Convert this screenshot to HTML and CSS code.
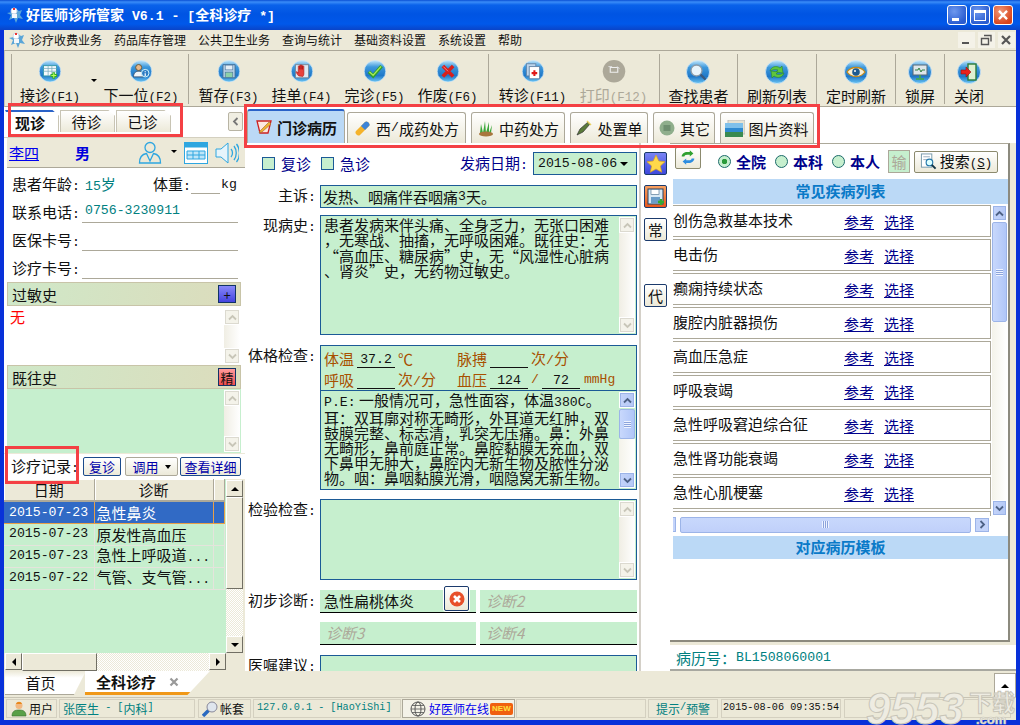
FILE: index.html
```html
<!DOCTYPE html>
<html lang="zh-CN">
<head>
<meta charset="utf-8">
<title>好医师诊所管家</title>
<link rel="stylesheet" href="styles.css">
</head>
<body>
<svg class="sprite" width="0" height="0" aria-hidden="true">
  <defs>
    <linearGradient id="ball" x1="0" y1="0" x2="0" y2="1">
      <stop offset="0" stop-color="#bfe6fb"/><stop offset=".3" stop-color="#3d98dc"/><stop offset=".7" stop-color="#1f78c8"/><stop offset="1" stop-color="#6cc6f4"/>
    </linearGradient>
    <symbol id="base" viewBox="0 0 24 24"><circle cx="12" cy="12" r="11.5" fill="url(#ball)" stroke="#cfe6f6" stroke-width=".8"/></symbol>
    <symbol id="chev" viewBox="0 0 9 7"><path d="M1 5.5 4.5 2 8 5.5" fill="none" stroke="currentColor" stroke-width="1.8"/></symbol>
    <symbol id="app" viewBox="0 0 18 18">
      <path d="M9 2 13 5 16 4 14 9 17 13 12 12 10 17 8 12 3 14 5 9 1 7 6 6Z" fill="#5aa6d8"/>
      <circle cx="8" cy="5" r="3" fill="#fff" stroke="#c8d8e8"/><rect x="7" y="2" width="2" height="2" fill="#e33"/>
      <path d="M6 8h5v4H6z" fill="#f4f8fb"/>
    </symbol>
  </defs>
</svg>

<div class="window">
  <header class="titlebar">
    <svg class="appicon"><use href="#app"/></svg>
    <span class="title">好医师诊所管家<span class="nb"> V6.1 - [</span>全科诊疗<span class="nb"> *]</span></span>
    <div class="winbtns">
      <div class="wb"><span class="wb-min"></span></div>
      <div class="wb"><span class="wb-max"></span></div>
      <div class="wb wb-close"><svg viewBox="0 0 20 20"><path d="M5.5 5.5 14.5 14.5M14.5 5.5 5.5 14.5" stroke="#fff" stroke-width="2.6"/></svg></div>
    </div>
  </header>

  <nav class="menubar">
    <svg class="menuicon"><use href="#app"/></svg>
    <span>诊疗收费业务</span><span>药品库存管理</span><span>公共卫生业务</span><span>查询与统计</span><span>基础资料设置</span><span>系统设置</span><span>帮助</span>
    <div class="mdi">
      <div class="mb"><svg viewBox="0 0 16 16"><path d="M4 11h7" stroke="#555" stroke-width="2"/></svg></div>
      <div class="mb"><svg viewBox="0 0 16 16"><path d="M6 3.5h7v6M3.5 6.5h7v6h-7z" fill="none" stroke="#555" stroke-width="1.4"/></svg></div>
      <div class="mb"><svg viewBox="0 0 16 16"><path d="M4 4 12 12M12 4 4 12" stroke="#555" stroke-width="2.2"/></svg></div>
    </div>
  </nav>

  <div class="toolbar">
    <div class="tg g1">
      <div class="tb w76"><svg class="ico" viewBox="0 0 24 24"><use href="#base"/><rect x="5" y="6" width="14" height="11" fill="#f4fafc" stroke="#39a"/><path d="M5 9h14M5 12h14M10 6v11M14 6v11" stroke="#7ab" stroke-width=".8"/><path d="M16 13v7M12.5 16.5h7" stroke="#3a3" stroke-width="3"/><path d="M16 14v5M13.5 16.5h5" stroke="#bf5" stroke-width="1.2"/></svg><span>接诊<span class="nt">(F1)</span></span></div>
      <div class="tarrow"></div>
      <div class="tb w82"><svg class="ico" viewBox="0 0 24 24"><use href="#base"/><circle cx="9.5" cy="8" r="3.2" fill="#e8b98c" stroke="#653"/><path d="M4 18c0-5 3-6 5.500-6s5 1 5 6z" fill="#f0f4f8" stroke="#357"/><circle cx="16.500" cy="14" r="4" fill="#2c7cc4" stroke="#dff"/><path d="M16.500 12v1M16.500 14v3" stroke="#fff" stroke-width="1.300"/></svg><span>下一位<span class="nt">(F2)</span></span></div>
    </div>
    <div class="tg g2">
      <div class="tb w73"><svg class="ico" viewBox="0 0 24 24"><use href="#base"/><path d="M5.500 5h13v14h-13z" fill="#b5cfe4" stroke="#3b6a96"/><rect x="8" y="5.500" width="8" height="5" fill="#e5eef6" stroke="#5b82a8" stroke-width=".7"/><rect x="8" y="13" width="8" height="5.500" fill="#8dd0a8" stroke="#4a7a9a" stroke-width=".7"/></svg><span>暂存<span class="nt">(F3)</span></span></div>
      <div class="tb w73"><svg class="ico" viewBox="0 0 24 24"><use href="#base"/><rect x="5" y="5" width="14" height="14" fill="#dfe8f2" stroke="#789"/><path d="M8.500 17c-2-2-3-4-2.500-4.500s1.500.5 2 1.500V7c0-1 1.500-1 1.500 0v3-4c0-1 1.500-1 1.500 0v4-4c0-1 1.500-1 1.500 0v4-3c0-1 1.500-1 1.500 0v8c0 1-.5 2-1 2.500z" fill="#e8413c" stroke="#a11" stroke-width=".6"/></svg><span>挂单<span class="nt">(F4)</span></span></div>
      <div class="tb w73"><svg class="ico" viewBox="0 0 24 24"><use href="#base"/><path d="M5.500 12.500 10 17 19 6.500" fill="none" stroke="#2f9e2f" stroke-width="3.800"/><path d="M6 12.500 10 16.300 18.500 6.800" fill="none" stroke="#a8ea5a" stroke-width="1.400"/></svg><span>完诊<span class="nt">(F5)</span></span></div>
      <div class="tb w73"><svg class="ico" viewBox="0 0 24 24"><use href="#base"/><path d="M6.500 6.500 17.500 17.500M17.500 6.500 6.500 17.500" stroke="#d8201c" stroke-width="3.800"/><path d="M7 7 12 12" stroke="#f88" stroke-width="1"/></svg><span>作废<span class="nt">(F6)</span></span></div>
    </div>
    <div class="tg g3">
      <div class="tb w81"><svg class="ico" viewBox="0 0 24 24"><use href="#base"/><rect x="5" y="4" width="10" height="13" fill="#bcd4ec" stroke="#68a"/><rect x="8" y="7" width="11" height="13" fill="#fff" stroke="#68a"/><path d="M13.500 11v6M10.500 14h6" stroke="#e01818" stroke-width="2.200"/></svg><span>转诊<span class="nt">(F11)</span></span></div>
      <div class="tb w81 off"><svg class="ico" viewBox="0 0 24 24"><circle cx="12" cy="12" r="12" fill="#aca899"/><path d="M8 8h8v5H8z" fill="none" stroke="#eee" stroke-width="1.200"/><path d="M6 7h4M15 7l3 2" stroke="#ddd"/></svg><span>打印<span class="nt">(F12)</span></span></div>
    </div>
    <div class="tg g4">
      <div class="tb"><svg class="ico" viewBox="0 0 24 24"><use href="#base"/><circle cx="10.500" cy="10.500" r="5.500" fill="#e8f4fb" stroke="#8a9aa8" stroke-width="1.300"/><path d="M14.500 14.500 19.500 19.500" stroke="#3a5a80" stroke-width="2.400"/></svg><span>查找患者</span></div>
    </div>
    <div class="tg g5">
      <div class="tb"><svg class="ico" viewBox="0 0 24 24"><use href="#base"/><path d="M5 11c1-4 6-6 10-3l2-2 1 7-7-1 2-2c-3-1-6 0-8 1z" fill="#5fc63c" stroke="#2a8a2a" stroke-width=".6"/><path d="M19 13c-1 4-6 6-10 3l-2 2-1-7 7 1-2 2c3 1 6 0 8-1z" fill="#5fc63c" stroke="#2a8a2a" stroke-width=".6"/></svg><span>刷新列表</span></div>
    </div>
    <div class="tg g5">
      <div class="tb"><svg class="ico" viewBox="0 0 24 24"><use href="#base"/><path d="M3 12c4-6 14-6 18 0-4 6-14 6-18 0z" fill="#f8f0d8" stroke="#c88a18" stroke-width="1.300"/><circle cx="12" cy="12" r="3.800" fill="#1c5a90"/><circle cx="11" cy="11" r="1" fill="#fff"/></svg><span>定时刷新</span></div>
    </div>
    <div class="tg g6">
      <div class="tb"><svg class="ico" viewBox="0 0 24 24"><use href="#base"/><rect x="5" y="5" width="14" height="10" fill="#dde6ea" stroke="#567"/><path d="M7 10h3l1-2 2 4 1-2h3" fill="none" stroke="#273" stroke-width=".9"/><path d="M12 15v3M8 19h8" stroke="#4a4" stroke-width="1.500"/></svg><span>锁屏</span></div>
    </div>
    <div class="tg g6">
      <div class="tb"><svg class="ico" viewBox="0 0 24 24"><use href="#base"/><rect x="11" y="4" width="8" height="16" fill="#dff0d0" stroke="#2a7a3a" stroke-width="1.400"/><path d="M4 10h5V7l5 5-5 5v-3H4z" fill="#e8201c" stroke="#911" stroke-width=".6"/></svg><span>关闭</span></div>
    </div>
  </div>

  <main class="main">
    <aside class="left">
      <div class="ltabs">
        <div class="ltab on">现诊</div><div class="ltab">待诊</div><div class="ltab">已诊</div>
        <div class="collapse"><svg class="chv chv-l"><use href="#chev"/></svg></div>
      </div>
      <div class="patient">
        <a class="pname">李四</a><span class="psex">男</span>
        <svg class="pi-user" viewBox="0 0 24 24"><circle cx="12" cy="6.500" r="5" fill="none" stroke="#2ea6e0" stroke-width="1.300"/><path d="M1.500 22c0-7 4-9 7-9.500L12 20l3.500-7.500c3 .5 7 2.500 7 9.500z" fill="none" stroke="#2ea6e0" stroke-width="1.300"/></svg>
        <span class="pdrop"></span>
        <svg class="pi-cal" viewBox="0 0 24 22"><rect x=".5" y=".5" width="23" height="21" fill="#fff" stroke="#2ea6e0"/><rect x=".5" y=".5" width="23" height="5" fill="#2ea6e0"/><path d="M3 9h18v8H3zM3 13h18M9 9v8M15 9v8" fill="#bfe6f8" stroke="#2ea6e0"/></svg>
        <svg class="pi-snd" viewBox="0 0 24 22"><path d="M1 7h5l7-6v20l-7-6H1z" fill="#e6f4fb" stroke="#2ea6e0"/><path d="M16 7c2 2 2 6 0 8M19 4c3 4 3 10 0 14M21.500 2c4 5 4 13 0 18" fill="none" stroke="#2ea6e0" stroke-width="1.300"/></svg>
      </div>
      <div class="info">
        <div class="irow"><span class="il">患者年龄<span class="n">:</span></span><span class="val age"><span class="n">15</span>岁</span><span class="il wt">体重<span class="n">:</span></span><span class="blank"></span><span class="n">kg</span></div>
        <div class="irow"><span class="il">联系电话<span class="n">:</span></span><span class="line val"><span class="n">0756-3230911</span></span></div>
        <div class="irow"><span class="il">医保卡号<span class="n">:</span></span><span class="line"></span></div>
        <div class="irow"><span class="il">诊疗卡号<span class="n">:</span></span><span class="line"></span></div>
      </div>
      <div class="hhead"><span>过敏史</span><span class="mini mini-blue">+</span></div>
      <div class="hbody white"><span class="red">无</span>
        <div class="vsb off"><div class="sbb"><svg class="chv"><use href="#chev"/></svg></div><div class="sbt"></div><div class="sbb"><svg class="chv chv-d"><use href="#chev"/></svg></div></div>
      </div>
      <div class="hhead"><span>既往史</span><span class="mini mini-red">精</span></div>
      <div class="hbody green">
        <div class="vsb off"><div class="sbb"><svg class="chv"><use href="#chev"/></svg></div><div class="sbt"></div><div class="sbb"><svg class="chv chv-d"><use href="#chev"/></svg></div></div>
      </div>
      <div class="records">
        <span class="rlabel">诊疗记录<span class="n">:</span></span>
        <span class="rbtn r1">复诊</span><span class="rbtn r2">调用<i class="caret"></i></span><span class="rbtn r3">查看详细</span>
      </div>
      <div class="tablewrap">
        <div class="tablearea">
          <table class="rtable">
            <thead><tr><th class="c1">日期</th><th class="c2">诊断</th><th></th></tr></thead>
            <tbody>
              <tr class="sel"><td class="n">2015-07-23</td><td>急性鼻炎</td><td></td></tr>
              <tr><td class="n">2015-07-23</td><td>原发性高血压</td><td></td></tr>
              <tr><td class="n">2015-07-23</td><td>急性上呼吸道<span class="n">...</span></td><td></td></tr>
              <tr><td class="n">2015-07-22</td><td>气管、支气管<span class="n">...</span></td><td></td></tr>
            </tbody>
          </table>
        </div>
        <div class="xpsb">
          <div class="xb"><i class="tri tri-u"></i></div><div class="xthumb"></div><div class="xtrack"></div><div class="xb"><i class="tri tri-d"></i></div>
        </div>
      </div>
      <div class="xph">
        <div class="xb"><i class="tri tri-l"></i></div><div class="xthumb-h"></div><div class="xtrack"></div><div class="xb"><i class="tri tri-r"></i></div><div class="xcorner"></div>
      </div>
    </aside>

    <section class="work">
      <div class="ctabs">
        <div class="ctab on t1"><svg class="ti" viewBox="0 0 18 18"><path d="M2 3h14l-3 12H5z" fill="#fde8e0" stroke="#c22" stroke-width="1.300"/><path d="M5 13 14 4l2 2-9 8-3 1z" fill="#f0b030" stroke="#963" stroke-width=".6"/></svg>门诊病历</div>
        <div class="ctab t2"><svg class="ti" viewBox="0 0 18 18"><path d="M2 12 11 3c2-2 6 2 4 4l-9 9c-2 2-6-2-4-4z" fill="#f5b32a"/><path d="M7 7 11 3c2-2 6 2 4 4l-4 4z" fill="#3c84d8"/></svg>西<span class="n">/</span>成药处方</div>
        <div class="ctab t3"><svg class="ti" viewBox="0 0 18 18"><path d="M3 14 4 5l2 9 2-12 1 12 3-11 0 11 3-8-1 8z" fill="#3ca83c"/><ellipse cx="9" cy="15" rx="7" ry="2.500" fill="#a8763c"/></svg>中药处方</div>
        <div class="ctab t4"><svg class="ti" viewBox="0 0 18 18"><path d="M2 16 5 10l8-7 2 2-7 8z" fill="#5a7a3a" stroke="#333" stroke-width=".7"/><path d="M12 2 16 6" stroke="#e8d060" stroke-width="1.500"/></svg>处置单</div>
        <div class="ctab t5"><svg class="ti" viewBox="0 0 18 18"><circle cx="9" cy="9" r="7.500" fill="#8fae8c"/><rect x="5.500" y="6" width="7" height="6" fill="#6f8f70"/></svg>其它</div>
        <div class="ctab t6"><svg class="ti ti-w" viewBox="0 0 20 17"><rect x="3" y="0" width="17" height="14" fill="#e6e2d2" stroke="#bbb"/><rect x="0" y="3" width="18" height="14" fill="#2f8ad0"/><rect x="0" y="3" width="18" height="5" fill="#7fc0ea"/><path d="M0 12h18v5H0z" fill="#3a8a50"/></svg>图片资料</div>
      </div>
      <div class="wbody">
        <div class="cform">
          <div class="checks">
            <i class="cb"></i><span class="navy">复诊</span><i class="cb cb2"></i><span class="navy">急诊</span>
            <span class="navy onset">发病日期<span class="n">:</span></span>
            <div class="select"><span class="n">2015-08-06</span><i class="tri tri-d"></i></div>
          </div>
          <div class="frow r-main"><label>主诉<span class="n">:</span></label><div class="field one">发热、咽痛伴吞咽痛<span class="n">3</span>天。</div></div>
          <div class="frow r-hist"><label>现病史<span class="n">:</span></label>
            <div class="field multi"><div class="ftext">患者发病来伴头痛、全身乏力，无张口困难<br>，无寒战、抽搐，无呼吸困难。既往史：无<br>“高血压、糖尿病”史，无“风湿性心脏病<br>、肾炎”史，无药物过敏史。</div>
              <div class="vsb off"><div class="sbb"><svg class="chv"><use href="#chev"/></svg></div><div class="sbt"></div><div class="sbb"><svg class="chv chv-d"><use href="#chev"/></svg></div></div>
            </div>
          </div>
          <div class="frow r-phys"><label>体格检查<span class="n">:</span></label>
            <div class="field phys">
              <div class="vitals">
                <div class="vrow"><span class="vl">体温</span><span class="vb"><span class="n">37.2</span></span><span class="vu">℃</span><span class="vl">脉搏</span><span class="vb"></span><span class="vu2">次<span class="n">/</span>分</span></div>
                <div class="vrow"><span class="vl">呼吸</span><span class="vb"></span><span class="vu">次<span class="n">/</span>分</span><span class="vl">血压</span><span class="vb"><span class="n">124</span></span><span class="vs n">/</span><span class="vb"><span class="n">72</span></span><span class="vmm n">mmHg</span></div>
              </div>
              <div class="pe"><div class="ftext tight"><span class="n">P.E:</span> 一般情况可，急性面容，体温<span class="n">380C</span>。<br>耳：双耳廓对称无畸形，外耳道无红肿，双<br>鼓膜完整、标志清，乳突无压痛。鼻：外鼻<br>无畸形，鼻前庭正常。鼻腔黏膜无充血，双<br>下鼻甲无肿大，鼻腔内无新生物及脓性分泌<br>物。咽：鼻咽黏膜光滑，咽隐窝无新生物。</div>
                <div class="vsb blue"><div class="sbb"><svg class="chv"><use href="#chev"/></svg></div><div class="sbthumb"><i class="grip"></i></div><div class="sbt"></div><div class="sbb"><svg class="chv chv-d"><use href="#chev"/></svg></div></div>
              </div>
            </div>
          </div>
          <div class="frow r-lab"><label>检验检查<span class="n">:</span></label>
            <div class="field multi">
              <div class="ftext"></div>
              <div class="vsb off"><div class="sbb"><svg class="chv"><use href="#chev"/></svg></div><div class="sbt"></div><div class="sbb"><svg class="chv chv-d"><use href="#chev"/></svg></div></div>
            </div>
          </div>
          <div class="frow r-diag"><label>初步诊断<span class="n">:</span></label>
            <div class="diag">
              <div class="dg dg-a">急性扁桃体炎<div class="dclear"><svg viewBox="0 0 16 16"><circle cx="8" cy="8" r="7.500" fill="#e8502a"/><path d="M5 5 11 11M11 5 5 11" stroke="#fff" stroke-width="2.600"/></svg></div></div>
              <div class="dg ph">诊断<span>2</span></div>
              <div class="dg ph">诊断<span>3</span></div>
              <div class="dg ph">诊断<span>4</span></div>
            </div>
          </div>
          <div class="frow r-adv"><label>医嘱建议<span class="n">:</span></label><div class="field advice"></div></div>
        </div>
        <div class="sidebtns">
          <div class="sbtn sb-blue"><svg viewBox="0 0 20 20"><path d="M10 1l2.800 6 6.200.7-4.600 4.300 1.300 6.300L10 15l-5.700 3.300L5.600 12 1 7.700 7.200 7z" fill="#ffd84a" stroke="#d8a020" stroke-width=".7"/></svg></div>
          <div class="sbtn sb-orange"><svg viewBox="0 0 20 20"><rect x="2" y="2" width="15" height="15" fill="#d8e8f4" stroke="#246"/><rect x="5" y="2.500" width="8" height="5" fill="#fff" stroke="#468" stroke-width=".6"/><rect x="5" y="10" width="9" height="6.500" fill="#6a9cc8"/><path d="M15 12v6M12 15h6" stroke="#3a3" stroke-width="2.400"/></svg></div>
          <div class="sbtn">常</div>
          <div class="sbtn s-dai">代</div>
        </div>
        <div class="rcol">
          <div class="rpanel">
            <div class="rtools">
              <div class="rf"><svg viewBox="0 0 20 16"><path d="M3 7c0-3 3-5 6-5h3V0l4 3.500L12 7V5H9C7 5 6 6 6 7H3z" fill="#2fa02f"/><path d="M17 9c0 3-3 5-6 5H8v2l-4-3.500L8 9v2h3c2 0 3-1 3-2h3z" fill="#2d8de0"/></svg></div>
              <i class="radio on"></i><b>全院</b><i class="radio"></i><b>本科</b><i class="radio"></i><b>本人</b>
              <span class="shu">输</span>
              <div class="search"><svg viewBox="0 0 18 18"><rect x="1.500" y="1" width="11" height="14" fill="#fff" stroke="#79a"/><path d="M3.500 4h7M3.500 7h4" stroke="#9ab"/><circle cx="10" cy="10" r="3.500" fill="#dff" stroke="#27a" stroke-width="1.200"/><path d="M12.500 12.500 16.500 16.500" stroke="#134" stroke-width="2"/></svg><span>搜索<span class="nt">(<u>S</u>)</span></span></div>
            </div>
            <div class="rhead">常见疾病列表</div>
            <div class="dlist">
              <div class="drows">
                <div class="drow"><span>创伤急救基本技术</span><a>参考</a><a>选择</a></div>
                <div class="drow"><span>电击伤</span><a>参考</a><a>选择</a></div>
                <div class="drow"><span>癫痫持续状态</span><a>参考</a><a>选择</a></div>
                <div class="drow"><span>腹腔内脏器损伤</span><a>参考</a><a>选择</a></div>
                <div class="drow"><span>高血压急症</span><a>参考</a><a>选择</a></div>
                <div class="drow"><span>呼吸衰竭</span><a>参考</a><a>选择</a></div>
                <div class="drow"><span>急性呼吸窘迫综合征</span><a>参考</a><a>选择</a></div>
                <div class="drow"><span>急性肾功能衰竭</span><a>参考</a><a>选择</a></div>
                <div class="drow"><span>急性心肌梗塞</span><a>参考</a><a>选择</a></div>
                <div class="drow"></div>
              </div>
              <div class="vsb blue big"><div class="sbb"><svg class="chv"><use href="#chev"/></svg></div><div class="sbthumb"><i class="grip"></i></div><div class="sbt"></div><div class="sbb"><svg class="chv chv-d"><use href="#chev"/></svg></div></div>
            </div>
            <div class="hsb">
              <div class="hstub"></div><div class="hthumb"><i class="grip-h"></i></div><div class="sbb"><svg class="chv chv-r"><use href="#chev"/></svg></div>
            </div>
            <div class="rhead r2h">对应病历模板</div>
          </div>
          <div class="recno"><span>病历号：</span><span class="n">BL1508060001</span></div>
        </div>
      </div>
    </section>
  </main>

  <div class="dock">
    <div class="dtab">首页</div>
    <div class="dtab active">全科诊疗<svg class="dx" viewBox="0 0 10 10"><path d="M1.500 1.500 8.500 8.500M8.500 1.500 1.500 8.500" stroke="#999" stroke-width="2.200"/></svg></div>
    <div class="dockup"><i class="tri tri-u"></i></div>
  </div>

  <footer class="status">
    <div class="sc s-user"><svg class="si" viewBox="0 0 16 16"><circle cx="8" cy="4.500" r="3.500" fill="#f2b880"/><path d="M5 3c1-3 5-3 6 0z" fill="#e8881c"/><path d="M1 15c0-5 3-6 7-6s7 1 7 6z" fill="#58a048" stroke="#3a7030" stroke-width=".6"/></svg>用户</div>
    <div class="sc s-doc teal">张医生<span class="ns"> - [</span>内科<span class="ns">]</span></div>
    <div class="sc s-acct"><svg class="si" viewBox="0 0 16 16"><path d="M1 15 8 8" stroke="#2a6ac0" stroke-width="3.400"/><circle cx="10" cy="6" r="5" fill="#dfe6ee" stroke="#889"/></svg>帐套</div>
    <div class="sc s-ip teal ns">127.0.0.1 - [HaoYiShi]</div>
    <div class="sc s-online"><svg class="si" viewBox="0 0 16 16"><circle cx="8" cy="8" r="7" fill="none" stroke="#555"/><ellipse cx="8" cy="8" rx="3" ry="7" fill="none" stroke="#555"/><path d="M1 8h14M2 4.500h12M2 11.500h12" stroke="#555" stroke-width=".8"/></svg><span class="online">好医师在线</span><span class="newb">NEW</span></div>
    <div class="sc s-empty"></div>
    <div class="sc s-tip teal">提示<span class="ns">/</span>预警</div>
    <div class="sc s-time ns">2015-08-06 09:35:54</div>
    <div class="sc s-last"></div>
  </footer>

  <div class="hl hl-a"></div>
  <div class="hl hl-b"></div>
  <div class="hl hl-c"></div>
  <div class="wmark"><span class="wm-n">9553</span><span class="wm-c">下载</span><span class="wm-d">.com</span></div>
</div>
</body>
</html>
```

FILE: styles.css
```css
* { box-sizing: border-box; }
html, body { margin: 0; padding: 0; }
body {
  width: 1020px; height: 725px; overflow: hidden;
  font-family: "Noto Sans CJK SC", "Noto Sans", sans-serif;
  font-size: 15px; line-height: 1; color: #111;
}
.sprite { position: absolute; }
.n { font-family: "Liberation Mono", monospace; font-size: 13.2px; }
.nt { font-family: "Liberation Mono", monospace; font-size: 12.5px; }
.ns { font-family: "Liberation Mono", monospace; font-size: 10.2px; }
.nb { font-family: "Liberation Mono", monospace; font-size: 13.2px; font-weight: 700; }
i { display: block; font-style: normal; }

.window {
  position: relative; width: 1020px; height: 725px; overflow: hidden;
  padding: 0 4px 5px;
  background: #0831d9;
  display: flex; flex-direction: column;
}

/* title bar */
.titlebar {
  height: 30px; margin: 0 -4px; padding: 0 7px 0 6px; flex: none;
  display: flex; align-items: center; color: #fff;
  background: linear-gradient(#0a4fd4 0, #3a8cf8 2px, #0a62ea 5px, #0054e3 14px, #0058ea 24px, #0a44c8 30px);
}
.appicon { width: 18px; height: 18px; margin-right: 2px; }
.title { font-size: 14px; font-weight: 700; white-space: pre; }
.winbtns { margin-left: auto; display: flex; gap: 3px; }
.wb {
  width: 20px; height: 20px; border: 1px solid #fff; border-radius: 3px;
  background: radial-gradient(circle at 35% 30%, #6e98ee, #2a5cd0 75%);
  position: relative; display: flex; align-items: center; justify-content: center;
}
.wb-min { position: absolute; left: 4px; bottom: 3px; width: 7px; height: 3px; background: #fff; }
.wb-max { width: 12px; height: 11px; border: 1px solid #fff; border-top-width: 3px; }
.wb-close { background: radial-gradient(circle at 35% 30%, #f09878, #d8441c 75%); }
.wb-close svg { width: 18px; height: 18px; }

/* menu */
.menubar {
  height: 20px; flex: none; background: #ece9d8; display: flex; align-items: center;
  gap: 12px; font-size: 12px; padding-left: 4px; color: #111;
}
.menuicon { width: 18px; height: 18px; margin-right: -8px; }
.mdi { margin-left: auto; display: flex; gap: 3px; padding-right: 1px; }
.mb { width: 17px; height: 16px; background: #f4f2e8; }
.mb svg { width: 16px; height: 16px; display: block; }

/* toolbar */
.toolbar {
  height: 57px; flex: none; background: #ece9d8;
  border-top: 1px solid #aca899; border-bottom: 1px solid #aca899; border-left: 1px solid #c8c4b4;
  display: flex; padding: 3px 0 3px 6px;
}
.tg { border-left: 1px solid #aca899; display: flex; height: 50px; }
.g1 { width: 177px; }
.g2 { width: 300px; padding-left: 3px; }
.g3 { width: 171px; padding-left: 3px; }
.g4 { width: 78px; justify-content: center; }
.g5 { width: 79px; justify-content: center; }
.g6 { width: 49px; justify-content: center; }
.tb { display: flex; flex-direction: column; align-items: center; padding-top: 6px; white-space: nowrap; }
.tb > span { margin-top: 4px; }
.ico { width: 24px; height: 24px; display: block; }
.w76 { width: 76px; } .w82 { width: 82px; } .w73 { width: 73px; } .w81 { width: 81px; }
.tarrow { width: 0; height: 0; border: 3px solid transparent; border-top: 3px solid #000; margin: 25px 3px 0; }
.tb.off { color: #aca899; }

/* main */
.main { height: 564px; flex: none; display: flex; background: #fff; }
.left { width: 241px; flex: none; display: flex; flex-direction: column; background: #fff; }
.ltabs { height: 31px; flex: none; display: flex; padding: 3px 0 0 1px; align-items: flex-start; gap: 1px; position: relative; border-bottom: 1px solid #d4d0c0; }
.ltab {
  width: 55px; height: 22px; display: flex; align-items: center; justify-content: center; padding-right: 2px;
  background: linear-gradient(#fff, #ece9d8); border: 1px solid #c8c4b4; border-bottom: 0;
  clip-path: polygon(0 0, 88% 0, 100% 26%, 100% 100%, 0 100%);
}
.ltab.on { font-weight: 700; background: #fff; border-top: 2px solid #2a62c8; width: 54px; border-color: #2a62c8 #c8c4b4 #fff #fff; padding-right: 4px; }
.collapse {
  position: absolute; left: 224px; top: 5px; width: 15px; height: 19px;
  background: #f0eee2; border: 1px solid #b8b4a4; border-radius: 2px; color: #777;
  display: flex; align-items: center; justify-content: center;
}
.chv { width: 9px; height: 7px; display: block; color: currentColor; }
.chv-d { transform: rotate(180deg); }
.chv-l { transform: rotate(-90deg); }
.chv-r { transform: rotate(90deg); }

.patient {
  height: 30px; flex: none; margin: 0 0 0 3px; display: flex; align-items: center;
  background: #ece9d8; border-bottom: 1px solid #aca899; color: #00d; font-weight: 700; position: relative;
}
.pname { margin-left: 2px; text-decoration: underline; font-weight: 400; color: #00e; }
.psex { margin-left: 36px; }
.pi-user { width: 24px; height: 24px; margin-left: 48px; }
.pdrop { width: 0; height: 0; border: 3px solid transparent; border-top-color: #000; margin: 0 6px 0 9px; }
.pi-cal { width: 24px; height: 22px; margin-left: 1px; }
.pi-snd { width: 24px; height: 22px; margin-left: 7px; }

.info { height: 114px; flex: none; padding: 3px 7px 0 8px; }
.irow { height: 27px; margin-bottom: 1px; display: flex; align-items: center; }
.il { width: 70px; flex: none; white-space: nowrap; }
.val { color: #008080; }
.age { width: 71px; padding-left: 3px; }
.age + .wt { width: 38px; }
.blank { width: 29px; height: 23px; align-self: flex-start; border-bottom: 1px solid #aca899; margin-right: 1px; }
.line { flex: 1; height: 24px; align-self: flex-start; border-bottom: 1px solid #aca899; display: flex; align-items: center; padding-left: 3px; }

.hhead {
  height: 24px; flex: none; margin: 0 4px 0 3px; padding: 0 4px;
  display: flex; align-items: center; justify-content: space-between;
  background: linear-gradient(100deg, #cfe8c8, #dcdcbc);
  border: 1px solid #c8c4a8;
}
.mini {
  width: 18px; height: 18px; display: flex; align-items: center; justify-content: center;
  border: 1px solid #136; font-size: 13px;
}
.mini-blue { background: linear-gradient(#8888f8, #4444e0); }
.mini-red { background: linear-gradient(#ff9c9c, #f04c4c); }
.hbody { flex: none; margin: 0 4px 0 3px; position: relative; display: flex; justify-content: space-between; }
.white { height: 59px; padding: 3px 1px 1px 3px; }
.green { height: 64px; background: #c6efce; padding: 1px 1px 1px 0; justify-content: flex-end; }
.red { color: #f00; }

/* light scrollbars */
.vsb { width: 16px; flex: none; display: flex; flex-direction: column; align-items: stretch; }
.sbb {
  height: 16px; width: 16px; flex: none; display: flex; align-items: center; justify-content: center;
  background: #f4f3ea; border: 1px solid #fff; box-shadow: 0 0 0 1px #dcdad0 inset; color: #c8c6b8;
}
.sbt { flex: 1; background: linear-gradient(90deg, #f0eee4, #fff); }
.vsb.blue .sbb { background: linear-gradient(90deg, #c4d4fa, #b4c8f6); color: #4d6185; box-shadow: 0 0 0 1px #9cb4e8 inset; }
.vsb.blue .sbt { background: linear-gradient(90deg, #f4f3ea, #fff); }
.sbthumb {
  height: 30px; margin-top: 1px; background: linear-gradient(90deg, #c8d8fc, #b0c6f8);
  border: 1px solid #9cb4e8; border-radius: 2px; display: flex; align-items: center; justify-content: center;
}
.grip { width: 7px; height: 7px; background: repeating-linear-gradient(#eef3ff 0 1px, #8ca4dc 1px 2px); }
.vsb.big { width: 15px; }
.vsb.big .sbb { width: 15px; }
.vsb.big .sbthumb { height: 100px; }

/* records */
.records { height: 26px; flex: none; display: flex; align-items: center; padding-left: 7px; border-top: 1px solid #ece9d8; position: relative; }
.rlabel { width: 72px; flex: none; white-space: nowrap; }
.rbtn {
  height: 19px; display: flex; align-items: center; justify-content: center; flex: none;
  border: 1px solid #1a4a8c; border-radius: 2px; background: linear-gradient(#fff, #ece9d8); color: #00a; font-size: 13px;
}
.r1 { width: 38px; }
.r2 { width: 53px; margin-left: 4px; border-color: #aca899; }
.r3 { width: 61px; margin-left: 2px; }
.caret { width: 0; height: 0; border: 3.5px solid transparent; border-top: 4px solid #000; margin: 4px 0 0 6px; }
.tablewrap { flex: 1; min-height: 0; display: flex; padding-right: 2px; background: #ece9d8; }
.tablearea { flex: 1; background: #c6efce; overflow: hidden; }
.rtable { width: 221px; table-layout: fixed; border-collapse: collapse; }
.rtable th {
  height: 22px; font-weight: 400; background: #ece9d8; padding: 0;
  border-right: 1px solid #aca899; border-bottom: 2px solid #aca899; box-shadow: inset 1px 1px 0 #fff;
}
.c1 { width: 90px; } .c2 { width: 119px; }
.rtable td { height: 22px; padding: 0 0 0 5px; white-space: nowrap; overflow: hidden; border-right: 1px solid #e4e4dc; border-bottom: 1px solid #e4e4dc; }
.rtable td.n { font-size: 13.2px; padding-left: 5px; }
.rtable td:nth-child(2) { padding-left: 2px; }
.sel td { background: #316ac5; color: #fff; border-color: #e8a048; border-width: 1px 1px 1px 0; border-style: solid; }

.xpsb { width: 17px; flex: none; display: flex; flex-direction: column; background: #ece9d8; border-top: 1px solid #ece9d8; }
.xb {
  width: 17px; height: 17px; flex: none; background: #ece9d8; display: flex; align-items: center; justify-content: center;
  border: 1px solid; border-color: #fff #716f64 #716f64 #fff;
}
.xthumb { height: 92px; border: 1px solid; border-color: #fff #716f64 #716f64 #fff; background: #ece9d8; }
.xtrack { flex: 1; background: repeating-conic-gradient(#fff 0 25%, #ece9d8 0 50%) 0 0 / 2px 2px; }
.tri { width: 0; height: 0; border: 4px solid transparent; }
.tri-u { border-bottom: 4px solid #000; border-top: 0; }
.tri-d { border-top: 4px solid #000; border-bottom: 0; }
.tri-l { border-right: 4px solid #000; border-left: 0; }
.tri-r { border-left: 4px solid #000; border-right: 0; }
.xph { height: 18px; flex: none; display: flex; background: #ece9d8; padding-left: 1px; }
.xthumb-h { width: 75px; border: 1px solid; border-color: #fff #716f64 #716f64 #fff; }
.xcorner { width: 19px; }

/* workspace */
.work { flex: 1; min-width: 0; display: flex; flex-direction: column; }
.ctabs { height: 36px; flex: none; display: flex; align-items: flex-end; padding-left: 2px; }
.ctab {
  height: 31px; display: flex; align-items: center; justify-content: center; white-space: nowrap;
  background: linear-gradient(#fff, #ece9d8); border: 1px solid #aca899; border-bottom: 0; border-radius: 3px 3px 0 0;
}
.ctab.on { background: #bbd9f6; border-color: #2a62c8 #aca899 #bbd9f6 #aca899; border-top: 2px solid #2a62c8; font-weight: 700; height: 34px; }
.t1 { width: 98px; margin-right: 2px; }
.t2 { width: 119px; margin-right: 5px; }
.t3 { width: 94px; margin-right: 5px; }
.t4 { width: 78px; margin-right: 5px; }
.t5 { width: 62px; margin-right: 5px; }
.t6 { width: 94px; }
.ti { width: 18px; height: 18px; margin-right: 4px; flex: none; }
.ti-w { width: 20px; height: 17px; margin-right: 3px; }

.wbody { flex: 1; min-height: 0; display: flex; }
.cform { width: 396px; flex: none; border-right: 2px solid #d4d0c8; padding: 9px 2px 0 0; overflow: hidden; }
.checks { height: 23px; display: flex; align-items: center; color: #00a; white-space: nowrap; }
.cb { width: 13px; height: 13px; flex: none; background: #c6efce; border: 1px solid #1b5a96; margin: 0 6px 0 17px; }
.cb2 { margin-left: 10px; }
.navy { color: #00008b; flex: none; }
.onset { margin-left: 90px; width: 67px; margin-right: 6px; white-space: nowrap; }
.select {
  width: 104px; height: 23px; flex: none; background: #c6efce; border: 1px solid #1b5a96; color: #111;
  display: flex; align-items: center; justify-content: space-between; padding: 0 8px 0 4px;
}
.frow { display: flex; }
.frow label { width: 71px; margin-right: 4px; text-align: right; flex: none; padding-top: 2px; white-space: nowrap; }
.field { width: 317px; background: #c6efce; border: 1px solid #1b5a96; flex: none; }
.r-main { margin-top: 10px; }
.one { height: 23px; display: flex; align-items: center; padding-left: 2px; }
.r-hist { margin-top: 7px; }
.multi { height: 120px; display: flex; justify-content: space-between; padding: 1px; }
.ftext { padding: 0 0 0 2px; line-height: 15.3px; white-space: nowrap; flex: 1; }
.tight { line-height: 15px; }
.r-phys { margin-top: 10px; }
.phys { height: 145px; display: flex; flex-direction: column; }
.vitals { height: 45px; border-bottom: 1px solid #1b5a96; padding: 2px 0 0 3px; color: #a85000; }
.vrow { height: 21px; display: flex; align-items: center; }
.vl { width: 33px; flex: none; white-space: nowrap; }
.vb { width: 38px; height: 19px; flex: none; border-bottom: 1px solid #111; color: #111; text-align: center; }
.vu { width: 62px; flex: none; padding-left: 3px; white-space: nowrap; }
.vu2 { padding-left: 3px; white-space: nowrap; }
.vs { width: 14px; text-align: center; flex: none; }
.vmm { margin-left: 4px; font-size: 13px; }
.pe { flex: 1; min-height: 0; display: flex; padding: 1px; justify-content: space-between; }
.r-lab { margin-top: 9px; }
.r-lab .multi { height: 81px; }
.r-diag { margin-top: 10px; }
.diag { width: 317px; display: grid; grid-template-columns: 156px 157px; gap: 9px 4px; flex: none; }
.dg { height: 23px; background: #c6efce; border-bottom: 1px solid #000; display: flex; align-items: center; padding: 0 0 2px 4px; position: relative; }
.ph { color: #aca899; font-style: italic; padding-left: 6px; }
.dclear {
  position: absolute; right: 7px; top: -4px; width: 25px; height: 25px; background: linear-gradient(#fff, #ece9d8);
  border: 1px solid #1b3a6c; border-radius: 2px; display: flex; align-items: center; justify-content: center; box-shadow: 0 0 0 1px #fff;
}
.dclear svg { width: 16px; height: 16px; }
.r-adv { margin-top: 10px; }
.advice { height: 40px; }

.sidebtns { width: 29px; flex: none; padding: 9px 0 0 3px; display: flex; flex-direction: column; gap: 10px; }
.sbtn {
  width: 23px; height: 23px; border: 1px solid #1b3a6c; border-radius: 2px; background: linear-gradient(#fff, #ece9d8);
  display: flex; align-items: center; justify-content: center; flex: none;
}
.sbtn svg { width: 20px; height: 20px; }
.sb-blue { background: linear-gradient(#7a84f4, #3e48dc); }
.sb-orange { background: linear-gradient(#f8a060, #e8581c); }
.s-dai { margin-top: 33px; }

.rcol { flex: 1; min-width: 0; display: flex; flex-direction: column; background: #ece9d8; }
.rpanel {
  height: 499px; flex: none; width: 340px; background: #fff; display: flex; flex-direction: column; padding-left: 3px;
  border-top: 1px solid #aca899; border-right: 2px solid #8c8a7e; border-bottom: 2px solid #8c8a7e; overflow: hidden;
}
.rtools { height: 35px; flex: none; display: flex; align-items: center; color: #00008b; position: relative; }
.rtools b { font-weight: 700; width: 31px; margin-right: 8px; white-space: nowrap; }
.rf {
  width: 26px; height: 22px; margin: -8px 17px 0 2px; background: linear-gradient(#fff, #ece9d8); border: 1px solid #8c8a6e; border-radius: 2px;
  display: flex; align-items: center; justify-content: center;
}
.rf svg { width: 18px; height: 15px; }
.radio { width: 13px; height: 13px; border-radius: 50%; background: #c6efce; border: 1px solid #1b6a6a; margin-right: 5px; flex: none; }
.radio.on { background: radial-gradient(circle, #2a9a3a 0 2.5px, #c6efce 3px); }
.shu { width: 22px; height: 23px; background: #c6efce; border: 1px solid #aca899; color: #aca899; display: flex; align-items: center; justify-content: center; margin-left: -1px; flex: none; }
.search {
  width: 84px; height: 22px; margin-left: 4px; flex: none; background: linear-gradient(#fff, #ece9d8); border: 1px solid #8c8a6e; border-radius: 2px;
  display: flex; align-items: center; justify-content: center; color: #111;
}
.search svg { width: 17px; height: 17px; margin-right: 3px; }
.rhead {
  width: 335px; height: 25px; flex: none; background: #bbd9f6; color: #0a7ac8; font-weight: 700; padding-bottom: 2px;
  display: flex; align-items: center; justify-content: center;
}
.dlist { height: 311px; flex: none; width: 335px; margin-top: 1px; display: flex; justify-content: space-between; padding-right: 1px; }
.drows { width: 318px; overflow: hidden; height: 311px; }
.drow {
  height: 32px; margin-bottom: 2px; border: 1px solid #aca899; border-left: 0; display: flex; align-items: center; background: #fff;
}
.drow span { width: 171px; flex: none; white-space: nowrap; padding-bottom: 4px; }
.drow a { color: #00008b; text-decoration: underline; width: 40px; flex: none; padding-top: 1px; }
.hsb { height: 17px; flex: none; width: 318px; display: flex; align-items: center; }
.hstub { width: 3px; height: 15px; background: #c4d4fa; border: 1px solid #9cb4e8; border-left: 0; }
.hthumb {
  width: 291px; height: 16px; margin: 0 3px 0 4px; background: linear-gradient(#c8d8fc, #c0d0fa); border: 1px solid #9cb4e8; border-radius: 2px;
  display: flex; align-items: center; justify-content: center;
}
.grip-h { width: 7px; height: 7px; background: repeating-linear-gradient(90deg, #eef3ff 0 1px, #8ca4dc 1px 2px); }
.hsb .sbb { background: #c4d4fa; color: #4d6185; box-shadow: 0 0 0 1px #9cb4e8 inset; }
.r2h { margin-top: 3px; height: 23px; }
.recno {
  height: 26px; margin-top: 3px; flex: none; background: #fff; display: flex; align-items: center; padding: 1px 0 0 6px; color: #008080;
  border-bottom: 2px solid #a8a8a0;
}

/* dock */
.dock { height: 26px; flex: none; display: flex; background: #ece9d8; position: relative; padding-left: 1px; }
.dtab {
  width: 81px; height: 24px; display: flex; align-items: center; justify-content: center; padding-right: 10px;
  background: linear-gradient(#ece9d8, #fff 30%, #fff); clip-path: polygon(0 0, 100% 0, 85% 100%, 0 100%); border-bottom: 1px solid #aca899;
}
.dtab.active {
  width: 125px; margin-left: -1px; font-weight: 700; background: #fff; border-bottom: 3px solid #f09818;
  clip-path: polygon(0 0, 100% 0, 82% 100%, 0 100%); padding-right: 20px;
}
.dx { width: 10px; height: 10px; margin-left: 13px; }
.dockup {
  position: absolute; right: 0; top: 2px; width: 22px; height: 24px; background: #fff; border: 1px solid #aca899; border-bottom: 0;
  display: flex; align-items: center; justify-content: center;
}

/* status */
.status { height: 23px; flex: none; background: #ece9d8; border-top: 1px solid #c8c4b4; display: flex; padding: 1px 0 2px 2px; font-size: 12px; position: relative; }
.sc { border: 1px solid #d4d0c0; height: 100%; display: flex; align-items: center; white-space: pre; margin-right: 3px; flex: none; }
.teal { color: #008080; }
.si { width: 16px; height: 16px; margin-right: 2px; flex: none; }
.s-user { width: 51px; padding-left: 4px; margin-right: 2px; }
.s-doc { width: 136px; padding-left: 3px; }
.s-acct { width: 53px; padding-left: 3px; margin-right: 2px; }
.s-ip { width: 148px; padding-left: 3px; margin-right: 1px; }
.s-online { width: 113px; padding-left: 7px; background: #f4f2e8; border-color: #aca899; margin-right: 1px; position: relative; }
.online { color: #00e; margin-left: 1px; }
.newb { margin-left: 1px; background: #f06010; color: #ffe040; font-size: 8px; font-weight: 700; font-family: "Liberation Sans", sans-serif; padding: 2px; border-radius: 2px; }
.s-empty { width: 130px; margin-right: 2px; }
.s-tip { width: 70px; justify-content: center; margin-right: 3px; }
.s-time { width: 120px; justify-content: center; }
.s-last { width: 167px; margin-right: 0; }

/* overlays */
.hl { position: absolute; border: 3px solid #f44044; pointer-events: none; }
.hl-a { left: 8px; top: 103px; width: 175px; height: 34px; }
.hl-b { left: 244px; top: 104px; width: 576px; height: 44px; }
.hl-c { left: 5px; top: 446px; width: 74px; height: 38px; }
.wmark { position: absolute; left: 866px; top: 684px; width: 154px; height: 41px; white-space: nowrap; color: #eeece2; pointer-events: none; overflow: hidden; }
.wm-n { font: italic 700 44px "Liberation Sans", sans-serif; -webkit-text-stroke: 1px #c8c5b8; position: absolute; left: 0; top: 0; }
.wm-c { position: absolute; left: 103px; top: 6px; font-size: 23px; font-weight: 700; -webkit-text-stroke: 1px #c8c5b8; }
.wm-d { position: absolute; left: 110px; top: 28px; font: 700 13px "Liberation Sans", sans-serif; -webkit-text-stroke: .6px #c8c5b8; }
```
